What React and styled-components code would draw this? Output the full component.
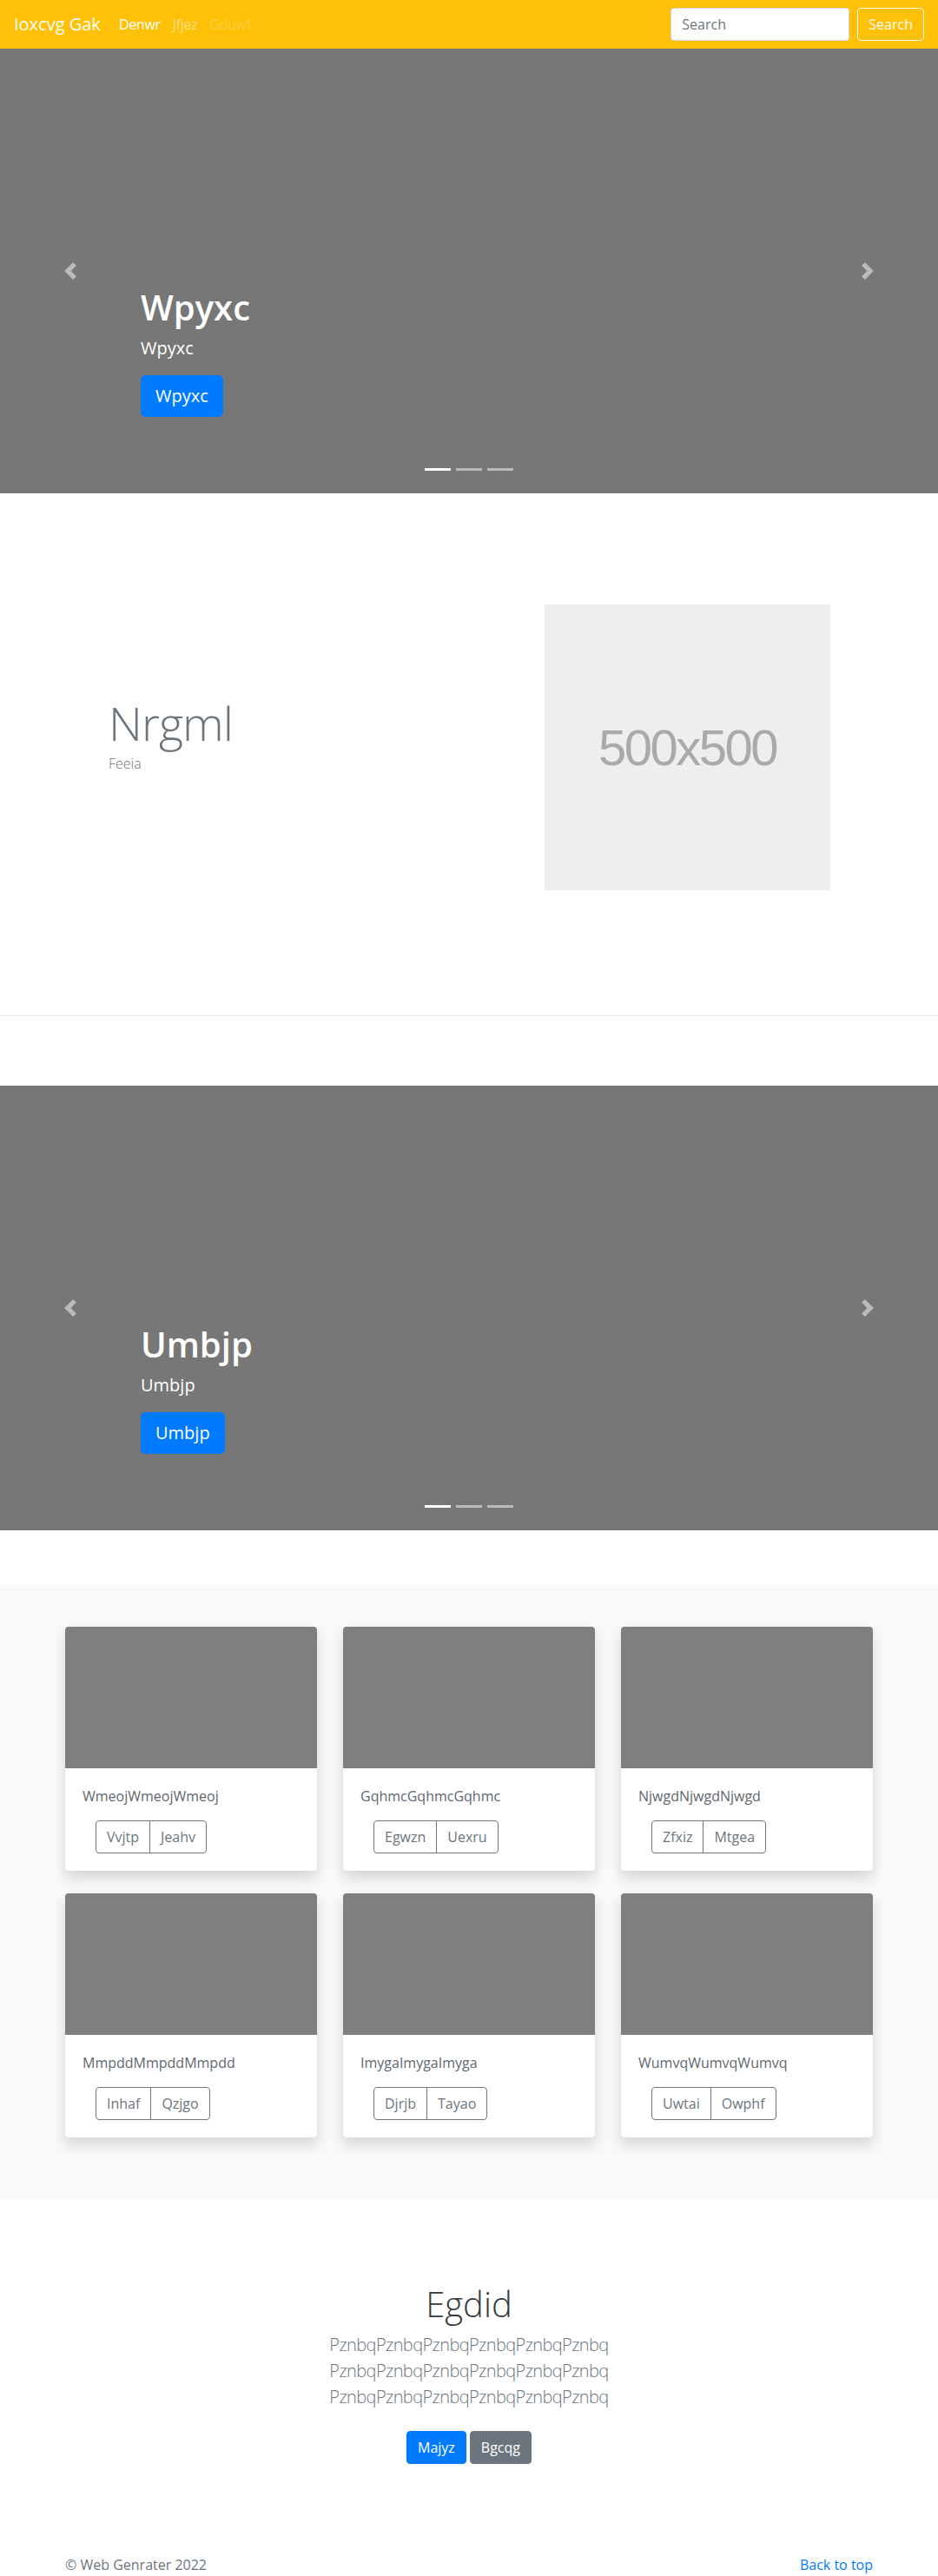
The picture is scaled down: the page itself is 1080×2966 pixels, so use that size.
import React from "react";
import styled, { createGlobalStyle } from "styled-components";

const GlobalStyle = createGlobalStyle`
  * {
    box-sizing: border-box;
  }
  body {
    margin: 0;
    font-family: "Open Sans", "Noto Sans", sans-serif;
    font-size: 16px;
    line-height: 1.5;
    color: #212529;
    background: #fff;
  }
`;

const Container = styled.div`
  max-width: 960px;
  margin: 0 auto;
  padding: 0 15px;
`;

/* navbar */

const Navbar = styled.nav`
  display: flex;
  align-items: center;
  height: 56px;
  padding: 0 16px;
  background: #ffc107;
`;

const Brand = styled.a`
  margin-right: 14px;
  font-size: 20px;
  line-height: 30px;
  color: #fff;
  text-decoration: none;
`;

const NavLink = styled.a`
  padding: 8px 7px;
  font-size: 16px;
  letter-spacing: -0.3px;
  color: ${(p) =>
    p.$state === "active"
      ? "#fff"
      : p.$state === "disabled"
      ? "rgba(255, 255, 255, 0.25)"
      : "rgba(255, 255, 255, 0.5)"};
  text-decoration: none;
`;

const SearchForm = styled.form`
  display: flex;
  gap: 9px;
  margin-left: auto;
`;

const SearchInput = styled.input`
  width: 206px;
  height: 38px;
  padding: 6px 12px;
  font-family: inherit;
  font-size: 16px;
  color: #495057;
  border: 1px solid #ced4da;
  border-radius: 4px;
  &::placeholder {
    color: #6c757d;
  }
`;

const OutlineLightButton = styled.button`
  height: 38px;
  padding: 6px 12px;
  font-family: inherit;
  font-size: 16px;
  color: #f8f9fa;
  background: transparent;
  border: 1px solid #f8f9fa;
  border-radius: 4px;
`;

/* carousel */

const CarouselBox = styled.div`
  position: relative;
  display: flex;
  flex-direction: column;
  justify-content: flex-end;
  align-items: flex-start;
  height: 512px;
  padding: 0 15% 88px;
  margin-bottom: ${(p) => p.$gap}px;
  background: #777;
  color: #fff;
`;

const CaptionTitle = styled.h1`
  margin: 0 0 8px;
  font-size: 40px;
  font-weight: 600;
  line-height: 48px;
`;

const CaptionText = styled.p`
  margin: 0 0 16px;
  font-size: 20px;
  line-height: 30px;
`;

const LargeButton = styled.a`
  display: inline-block;
  padding: 8px 16px;
  font-size: 20px;
  line-height: 30px;
  color: #fff;
  background: #007bff;
  border: 1px solid #007bff;
  border-radius: 5px;
  text-decoration: none;
`;

const Control = styled.a`
  position: absolute;
  top: 0;
  bottom: 0;
  ${(p) => (p.$side === "left" ? "left: 0;" : "right: 0;")}
  display: flex;
  align-items: center;
  justify-content: center;
  width: 15%;
  opacity: 0.5;
`;

const Indicators = styled.ol`
  position: absolute;
  left: 0;
  right: 0;
  bottom: 26px;
  display: flex;
  justify-content: center;
  gap: 6px;
  margin: 0;
  padding: 0;
  list-style: none;
`;

const Indicator = styled.li`
  width: 30px;
  height: 3px;
  background: #fff;
  opacity: ${(p) => (p.$active ? 1 : 0.5)};
`;

const Carousel = ({ title, gap }) => (
  <CarouselBox $gap={gap}>
    <CaptionTitle>{title}</CaptionTitle>
    <CaptionText>{title}</CaptionText>
    <LargeButton href="#">{title}</LargeButton>
    <Control $side="left" href="#">
      <svg width="20" height="20" viewBox="0 0 8 8" fill="#fff">
        <path d="M5.25 0l-4 4 4 4 1.5-1.5-2.5-2.5 2.5-2.5-1.5-1.5z" />
      </svg>
    </Control>
    <Control $side="right" href="#">
      <svg width="20" height="20" viewBox="0 0 8 8" fill="#fff">
        <path d="M2.75 0l-1.5 1.5 2.5 2.5-2.5 2.5 1.5 1.5 4-4-4-4z" />
      </svg>
    </Control>
    <Indicators>
      <Indicator $active />
      <Indicator />
      <Indicator />
    </Indicators>
  </CarouselBox>
);

/* feature */

const FeatureSection = styled.section`
  margin-bottom: 80px;
  border-bottom: 1px solid rgba(0, 0, 0, 0.1);
`;

const FeatureRow = styled.div`
  display: grid;
  grid-template-columns: 1fr 1fr;
  align-items: center;
  padding: 128px 0 144px;
`;

const FeatureText = styled.div`
  padding: 0 0 30px 50px;
`;

const FeatureTitle = styled.h1`
  margin: 0 0 2px;
  font-size: 54px;
  font-weight: 300;
  line-height: 1.2;
  letter-spacing: -1px;
  color: #6c757d;
`;

const FeatureSub = styled.p`
  margin: 0;
  font-size: 16px;
  font-weight: 300;
  color: #6c757d;
`;

const FeatureMedia = styled.div`
  display: flex;
  justify-content: flex-end;
  padding-right: 49px;
`;

const Placeholder = styled.div`
  display: flex;
  align-items: center;
  justify-content: center;
  width: 329px;
  height: 329px;
  background: #eee;
  color: #aaa;
  font-family: "Liberation Sans", Arial, sans-serif;
  font-size: 58px;
  letter-spacing: -2.5px;
`;

/* album */

const Album = styled.section`
  padding: 48px 0 72px;
  background: #f8f9fa;
`;

const CardGrid = styled.div`
  display: grid;
  grid-template-columns: repeat(3, 1fr);
  gap: 26px 30px;
`;

const Card = styled.div`
  overflow: hidden;
  background: #fff;
  border-radius: 4px;
  box-shadow: 0 8px 16px rgba(0, 0, 0, 0.15);
`;

const CardImage = styled.div`
  height: 163px;
  background: #7f7f7f;
`;

const CardBody = styled.div`
  padding: 20px;
`;

const CardText = styled.p`
  margin: 0 0 16px;
  font-size: 16px;
  line-height: 24px;
  color: #5f6770;
`;

const BtnGroup = styled.div`
  display: inline-flex;
  margin-left: 15px;
`;

const GroupButton = styled.button`
  height: 38px;
  padding: 6px 12px;
  font-family: inherit;
  font-size: 16px;
  color: #6c757d;
  background: transparent;
  border: 1px solid #6c757d;
  border-radius: 0;
  &:first-child {
    border-radius: 4px 0 0 4px;
  }
  & + & {
    margin-left: -1px;
    border-radius: 0 4px 4px 0;
  }
`;

const cards = [
  ["WmeojWmeojWmeoj", "Vvjtp", "Jeahv"],
  ["GqhmcGqhmcGqhmc", "Egwzn", "Uexru"],
  ["NjwgdNjwgdNjwgd", "Zfxiz", "Mtgea"],
  ["MmpddMmpddMmpdd", "Inhaf", "Qzjgo"],
  ["ImygaImygaImyga", "Djrjb", "Tayao"],
  ["WumvqWumvqWumvq", "Uwtai", "Owphf"],
];

/* intro */

const Intro = styled.section`
  padding-top: 96px;
  text-align: center;
`;

const IntroTitle = styled.h1`
  margin: 0 0 8px;
  font-size: 40px;
  font-weight: 300;
  line-height: 48px;
  color: #343a40;
`;

const Lead = styled.p`
  margin: 0;
  font-size: 20px;
  font-weight: 300;
  line-height: 30px;
  letter-spacing: -0.6px;
  color: #6c757d;
  span {
    display: block;
  }
`;

const ButtonRow = styled.div`
  display: flex;
  justify-content: center;
  gap: 4px;
  margin-top: 24px;
`;

const SolidButton = styled.a`
  padding: 6px 12px;
  font-size: 16px;
  line-height: 24px;
  color: #fff;
  background: ${(p) => (p.$variant === "secondary" ? "#6c757d" : "#007bff")};
  border: 1px solid ${(p) => (p.$variant === "secondary" ? "#6c757d" : "#007bff")};
  border-radius: 4px;
  text-decoration: none;
`;

/* footer */

const Footer = styled.footer`
  margin-top: 104px;
`;

const FooterRow = styled.div`
  display: flex;
  justify-content: space-between;
  line-height: 24px;
  color: #6c757d;
`;

const BackLink = styled.a`
  color: #007bff;
  text-decoration: none;
`;

export default function App() {
  return (
    <>
      <GlobalStyle />
      <Navbar>
        <Brand href="#">Ioxcvg Gak</Brand>
        <NavLink href="#" $state="active">Denwr</NavLink>
        <NavLink href="#">Jfjez</NavLink>
        <NavLink href="#" $state="disabled">Gduwf</NavLink>
        <SearchForm onSubmit={(e) => e.preventDefault()}>
          <SearchInput placeholder="Search" />
          <OutlineLightButton type="submit">Search</OutlineLightButton>
        </SearchForm>
      </Navbar>

      <Carousel title="Wpyxc" gap={0} />

      <FeatureSection>
        <Container>
          <FeatureRow>
            <FeatureText>
              <FeatureTitle>Nrgml</FeatureTitle>
              <FeatureSub>Feeia</FeatureSub>
            </FeatureText>
            <FeatureMedia>
              <Placeholder>500x500</Placeholder>
            </FeatureMedia>
          </FeatureRow>
        </Container>
      </FeatureSection>

      <Carousel title="Umbjp" gap={63} />

      <Album>
        <Container>
          <CardGrid>
            {cards.map(([text, a, b]) => (
              <Card key={text}>
                <CardImage />
                <CardBody>
                  <CardText>{text}</CardText>
                  <BtnGroup>
                    <GroupButton>{a}</GroupButton>
                    <GroupButton>{b}</GroupButton>
                  </BtnGroup>
                </CardBody>
              </Card>
            ))}
          </CardGrid>
        </Container>
      </Album>

      <Intro>
        <Container>
          <IntroTitle>Egdid</IntroTitle>
          <Lead>
            <span>PznbqPznbqPznbqPznbqPznbqPznbq</span>
            <span>PznbqPznbqPznbqPznbqPznbqPznbq</span>
            <span>PznbqPznbqPznbqPznbqPznbqPznbq</span>
          </Lead>
          <ButtonRow>
            <SolidButton href="#">Majyz</SolidButton>
            <SolidButton href="#" $variant="secondary">Bgcqg</SolidButton>
          </ButtonRow>
        </Container>
      </Intro>

      <Footer>
        <Container>
          <FooterRow>
            <span>© Web Genrater 2022</span>
            <BackLink href="#">Back to top</BackLink>
          </FooterRow>
        </Container>
      </Footer>
    </>
  );
}
